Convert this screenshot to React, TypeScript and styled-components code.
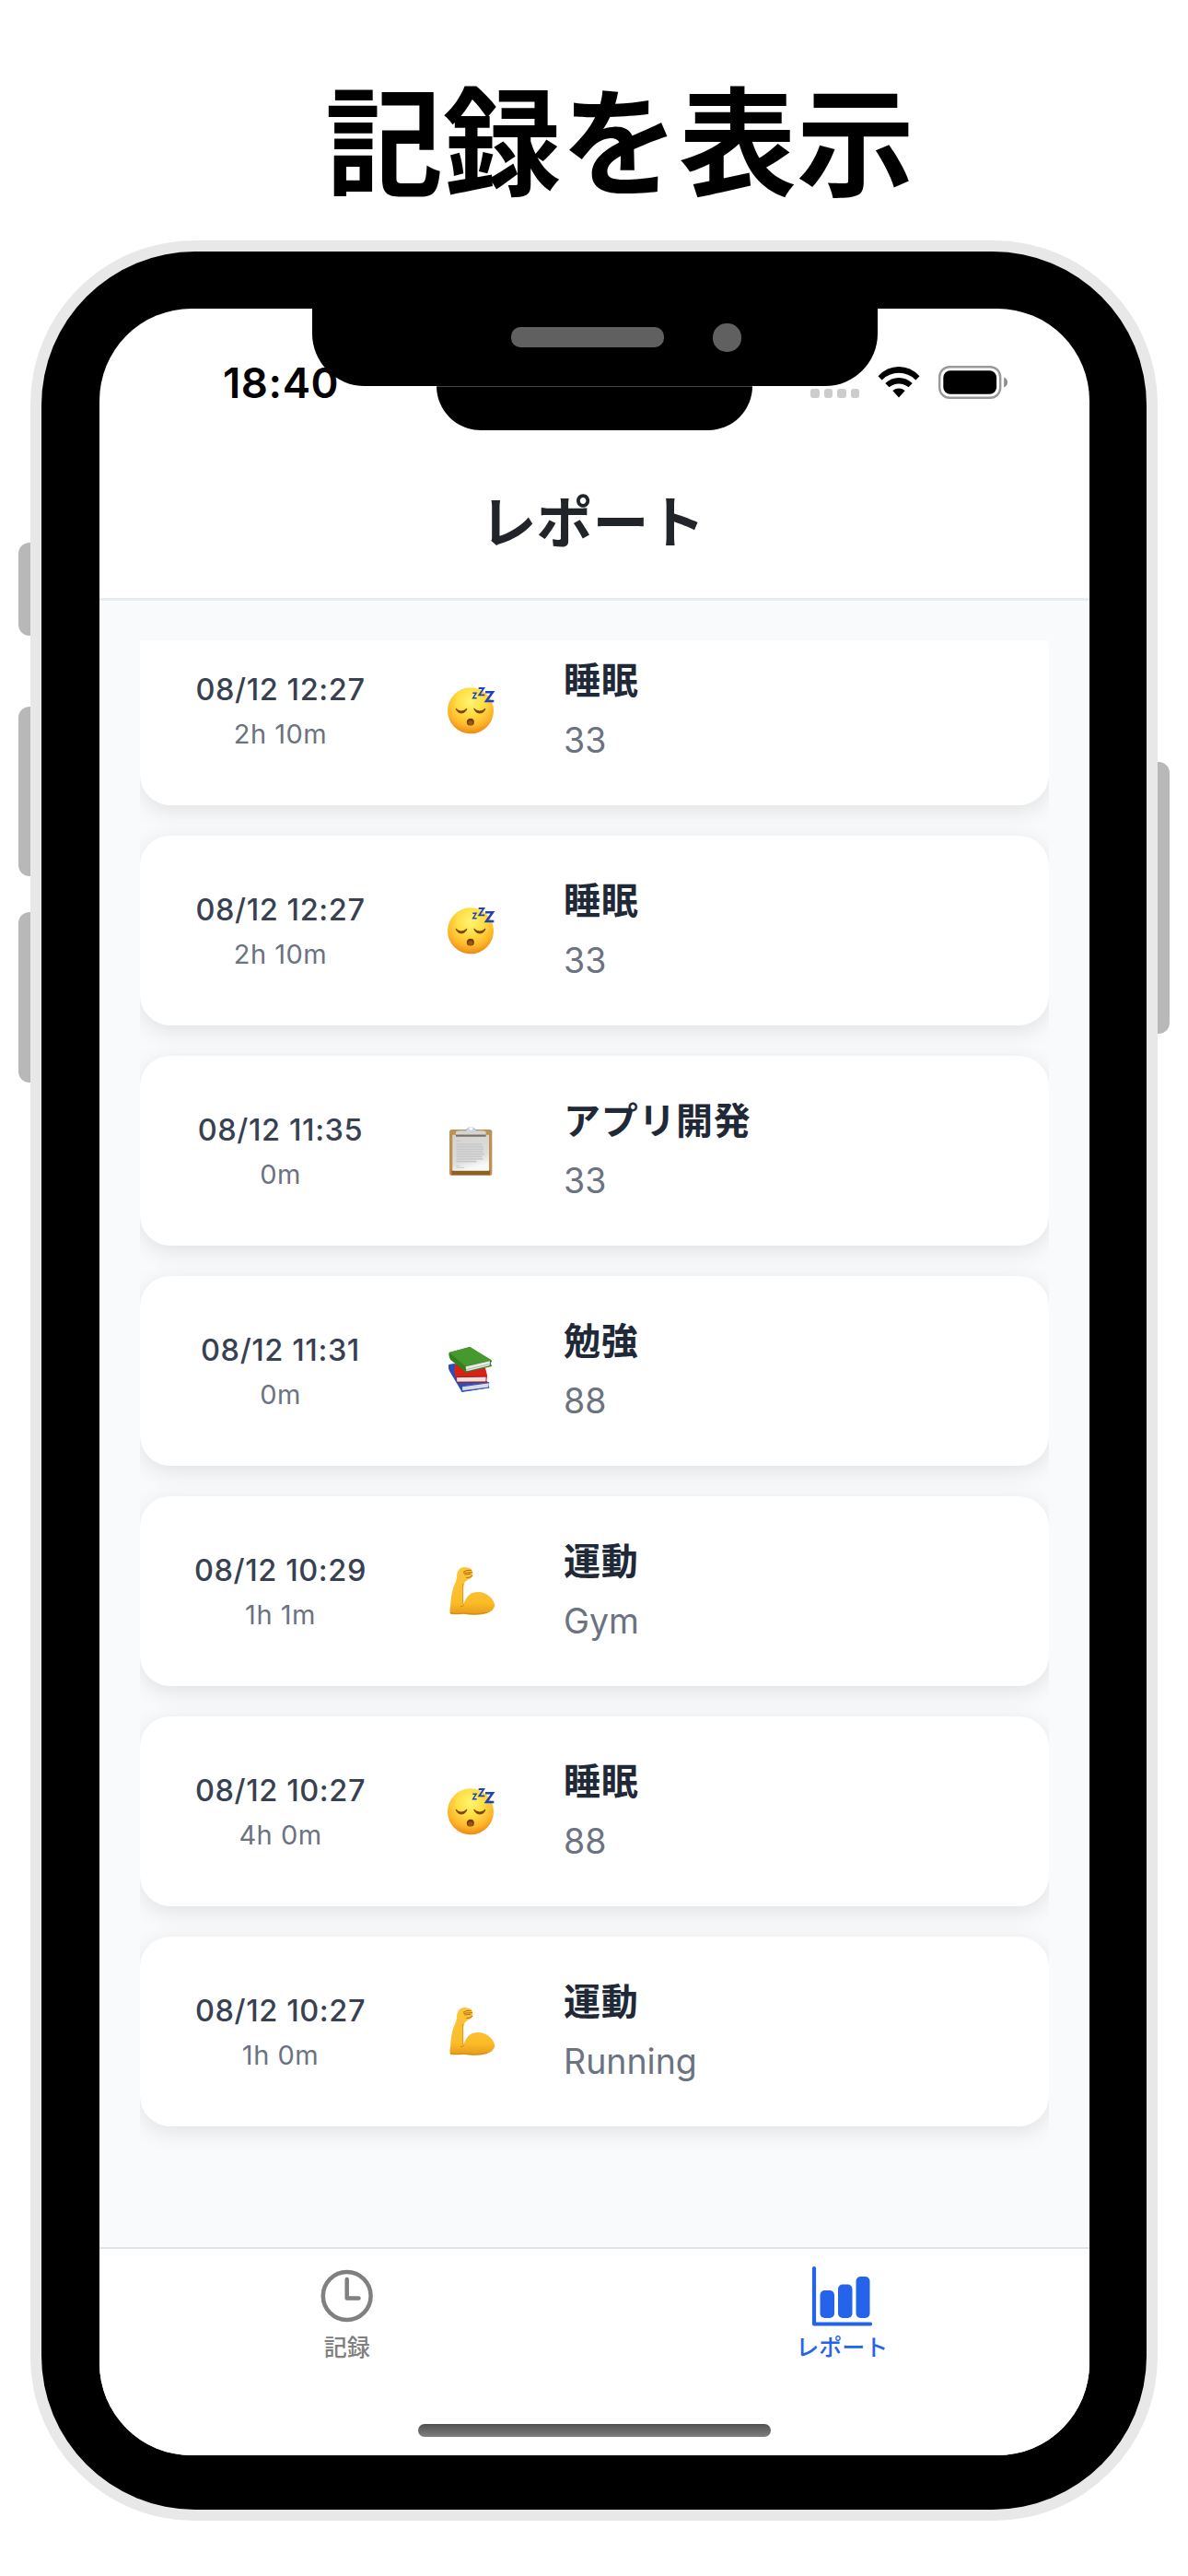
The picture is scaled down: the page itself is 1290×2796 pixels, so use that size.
import React from "react";
import styled, { createGlobalStyle } from "styled-components";

const jp = `"Noto Sans CJK JP", sans-serif`;
const latin = `Inter, "Noto Sans CJK JP", sans-serif`;

const Global = createGlobalStyle`
  * { box-sizing: border-box; }
  body { margin: 0; background: #fff; }
`;

const Page = styled.main`
  width: 1290px;
  height: 2796px;
  overflow: hidden;
  display: flex;
  flex-direction: column;
  background: #fff;
`;

const Headline = styled.h1`
  margin: 0;
  height: 261px;
  padding: 53px 0 0 56px;
  font: 700 128px/190px ${jp};
  text-align: center;
  color: #000;
`;

const Device = styled.div`
  display: flex;
  padding-left: 20px;
`;

const Side = styled.div`
  width: 13px;
  display: flex;
  flex-direction: column;
`;

const SideButton = styled.div<{ $gap: number; $length: number; $right?: boolean }>`
  margin-top: ${(p) => p.$gap}px;
  height: ${(p) => p.$length}px;
  background: #b8b8b8;
  border-radius: ${(p) => (p.$right ? "0 12px 12px 0" : "12px 0 0 12px")};
`;

const Shell = styled.div`
  width: 1224px;
  height: 2475px;
  padding: 12px;
  border-radius: 178px;
  background: #e8e8e8;
`;

const Bezel = styled.div`
  position: relative;
  height: 2451px;
  padding: 62px 62px 59px 63px;
  border-radius: 167px;
  background: #000;
`;

const Screen = styled.div`
  height: 2330px;
  border-radius: 100px;
  overflow: hidden;
  display: flex;
  flex-direction: column;
  background: #fff;
`;

const Notch = styled.div`
  position: absolute;
  top: 62px;
  left: 294px;
  width: 614px;
  height: 84px;
  display: flex;
  align-items: center;
  padding: 0 0 22px 216px;
  gap: 53px;
  border-radius: 0 0 57px 57px;
  background: #000;
`;

const Speaker = styled.div`
  width: 166px;
  height: 22px;
  border-radius: 10px;
  background: #606060;
`;

const Camera = styled.div`
  width: 31px;
  height: 31px;
  border-radius: 15px;
  background: #606060;
`;

const Island = styled.div`
  position: absolute;
  top: 146px;
  left: 429px;
  width: 343px;
  height: 48px;
  border-top: 1px solid #444;
  border-radius: 0 0 49px 49px;
  background: #000;
`;

const StatusBar = styled.div`
  height: 161px;
  flex: none;
  display: flex;
  justify-content: space-between;
  padding: 60px 88px 0 134px;
`;

const Clock = styled.div`
  padding-top: 1px;
  font: 600 45.5px/40px ${latin};
  letter-spacing: 0.6px;
  color: #000;
`;

const StatusIcons = styled.div`
  display: flex;
  align-items: center;
  height: 40px;
`;

const Signal = styled.div`
  display: flex;
  gap: 5px;
  margin: 24px 20px 0 0;
`;

const SignalDot = styled.i`
  width: 9.5px;
  height: 9.5px;
  border-radius: 3px;
  background: #ccc;
`;

const Header = styled.header`
  height: 156px;
  flex: none;
  border-bottom: 3px solid #e9ecef;
  padding: 24px 4px 0 0;
  font: 700 61px/88px ${jp};
  text-align: center;
  color: #212529;
`;

const Content = styled.section`
  flex: 1;
  padding: 43px 44px 0;
  background: #f9fafc;
`;

const List = styled.div`
  height: 1744px;
  overflow: hidden;
`;

const Rows = styled.div`
  margin-top: -27px;
  display: flex;
  flex-direction: column;
  gap: 33px;
`;

const Card = styled.article`
  height: 206px;
  display: grid;
  grid-template-columns: 305px 108px 1fr;
  border-radius: 33px;
  background: #fff;
  box-shadow: 0 6px 24px rgba(0, 0, 0, 0.1);
`;

const When = styled.div`
  padding-top: 61px;
  display: flex;
  flex-direction: column;
  align-items: center;
  gap: 9px;
`;

const Started = styled.div`
  font: 500 32.5px/40px ${latin};
  letter-spacing: 0.6px;
  color: #374151;
`;

const Duration = styled.div`
  font: 400 29px/37px ${latin};
  letter-spacing: 0.5px;
  color: #6b7280;
`;

const Glyph = styled.div`
  display: flex;
  align-items: center;
  justify-content: center;
`;

const What = styled.div`
  padding: 44px 0 0 47px;
  display: flex;
  flex-direction: column;
  gap: 21px;
`;

const Activity = styled.div`
  font: 700 40px/48px ${jp};
  letter-spacing: 0.7px;
  color: #1f2937;
`;

const Note = styled.div`
  font: 400 37.5px/46px ${latin};
  color: #6b7280;
`;

const TabBar = styled.nav`
  height: 226px;
  flex: none;
  display: flex;
  flex-direction: column;
  align-items: center;
  border-top: 2px solid #e2e3e4;
  background: #fff;
`;

const Tabs = styled.div`
  width: 100%;
  height: 190px;
  display: grid;
  grid-template-columns: 1fr 1fr;
`;

const Tab = styled.div<{ $active?: boolean }>`
  display: flex;
  flex-direction: column;
  align-items: center;
  padding-top: 18px;
  color: ${(p) => (p.$active ? "#2563eb" : "#808080")};
`;

const TabLabel = styled.span`
  margin-top: 3px;
  font: 500 25px/32px ${jp};
`;

const HomeIndicator = styled.div`
  width: 383px;
  height: 14px;
  border-radius: 7px;
  background: linear-gradient(#505050, #808080);
`;

const WifiIcon = () => (
  <svg width="46" height="34" viewBox="0 0 46 34" style={{ marginRight: 20 }}>
    <path d="M0.5 10.2Q10 0 23 0T45.5 10.2L41.4 14.4Q33.500 6.800 23 6.800T4.600 14.400Z" />
    <path d="M8.200 18.100Q14.500 12 23 12T37.800 18.100L33.500 22.300Q29 18.400 23 18.400T12.500 22.300Z" />
    <path d="M16.300 26Q23 21.200 29.700 26L23 33.500Z" />
  </svg>
);

const BatteryIcon = () => (
  <svg width="76" height="36" viewBox="0 0 76 36">
    <rect x="1.200" y="1.200" width="66" height="33.600" rx="11" fill="none" stroke="#999" strokeWidth="2.400" />
    <rect x="5.300" y="5.300" width="57.800" height="25.400" rx="7.500" />
    <path d="M71.200 12.500Q75 14.500 75 18T71.200 23.500Z" fill="#8c8c8c" />
  </svg>
);

const Sleeping = () => (
  <svg width="56" height="56" viewBox="69 68 168 168">
    <defs>
      <radialGradient id="face" cx="0.5" cy="0.3" r="0.72">
        <stop offset="0" stopColor="#fff470" />
        <stop offset="0.4" stopColor="#ffdf45" />
        <stop offset="0.75" stopColor="#fdb52a" />
        <stop offset="1" stopColor="#ea8414" />
      </radialGradient>
    </defs>
    <circle cx="153" cy="153" r="75" fill="url(#face)" />
    <path d="M105 146Q122 164 141 146Q136 161 123 161T105 146ZM164 146Q183 164 201 146Q197 161 183 161T164 146Z" fill="#7b4206" stroke="#7b4206" strokeWidth="2.500" strokeLinejoin="round" />
    <ellipse cx="152.500" cy="190" rx="12" ry="11.500" fill="#6e3d06" />
    <ellipse cx="152.500" cy="193" rx="8" ry="7" fill="#9a570a" />
    <g fill="none" stroke="#1f43bd" strokeLinejoin="miter">
      <path d="M160 96H171L161 112H173" strokeWidth="4.500" />
      <path d="M179 80H196L181 102H199" strokeWidth="5.500" />
      <path d="M201 93H225L204 122H229" strokeWidth="7.500" />
    </g>
  </svg>
);

const Clipboard = () => (
  <svg width="56" height="56" viewBox="69 62 168 168">
    <defs>
      <linearGradient id="paper" x1="0" y1="0" x2="0.3" y2="1">
        <stop offset="0" stopColor="#d2d2d2" />
        <stop offset="0.75" stopColor="#dedede" />
        <stop offset="1" stopColor="#f8f8f8" />
      </linearGradient>
    </defs>
    <rect x="84" y="77" width="139" height="150" rx="8" fill="#bd9150" />
    <path d="M91 210H216V224H91Z" fill="#8c6123" />
    <path d="M94 94H213V211H94Z" fill="url(#paper)" />
    <path d="M106 114H122M106 195H118M106 201H132" stroke="#bbb" strokeWidth="2" />
    <path d="M106 125H190M106 133H194M106 141H196M106 149H193M106 157H197M106 165H190M106 173H194M106 181H172" stroke="#c8c8c8" strokeWidth="5" />
    <path d="M105 94H203V100H105Z" fill="#77706a" />
    <path d="M105 93V86Q106 81 116 81H134Q139 80 140 76Q143 68 154 68T168 76Q169 80 175 81H192Q202 81 203 86V93Z" fill="#cfd4d9" />
    <circle cx="154" cy="74" r="5" fill="#fff" />
    <path d="M136 81Q140 79 142 74M172 81Q168 79 166 74" fill="none" stroke="#86addb" strokeWidth="3" />
  </svg>
);

const Books = () => (
  <svg width="56" height="56" viewBox="69 74 168 168">
    <path d="M82 137L100 134L214 196L212 206L214 213L125 227L84 158Q79 148 82 137Z" fill="#2b4eb8" />
    <path d="M126 208L213 196L210 212L127 223Z" fill="#dcdcdc" />
    <path d="M126 208L213 196M122 224L214 212" stroke="#3459cc" strokeWidth="3.500" />
    <path d="M104 134L201 148L207 172L205 195L110 195L101 168Q98 148 104 134Z" fill="#d92118" />
    <path d="M108 179L203 177L202 193L109 193Z" fill="#e6e3e0" />
    <path d="M106 178L207 176M108 195L207 194" stroke="#b8140f" strokeWidth="3" />
    <path d="M83 98L151 80L221 123L222 128L218 131L222 143L138 163L88 122Q80 110 83 98Z" fill="#32811f" />
    <path d="M83 98L151 80L220 124L136 142Z" fill="#46982f" />
    <path d="M137 144L216 126L215 141L139 159Z" fill="#e9e9e9" />
    <path d="M138 154L214 136" stroke="#b4b4b4" strokeWidth="3" />
  </svg>
);

const Muscle = () => (
  <svg width="56" height="56" viewBox="69 56 168 168">
    <defs>
      <linearGradient id="arm" x1="0" y1="0" x2="0" y2="1">
        <stop offset="0" stopColor="#fcc63c" />
        <stop offset="0.75" stopColor="#fbbc28" />
        <stop offset="1" stopColor="#e59a1a" />
      </linearGradient>
    </defs>
    <path d="M112 75Q118 63 130 62Q148 62 157 70Q161 78 159 91Q156 98 147 101L134 111L128 128L128 184Q134 173 140 162Q151 144 174 143Q200 142 218 160Q230 172 232 187Q228 204 207 212Q170 222 130 214Q108 217 89 215Q83 209 87 191Q89 150 98 125Q106 108 108 97Q107 85 112 75Z" fill="url(#arm)" />
    <path d="M128 116V183M120 190Q126 191 132 186M86 211Q107 216 130 212Q170 219 207 210" fill="none" stroke="#d48310" strokeWidth="2.500" />
    <path d="M130 77Q139 70 154 72M131 81Q140 79 158 79M134 86L152 84M140 97Q151 97 159 90" fill="none" stroke="#b46b10" strokeWidth="3" strokeLinecap="round" />
  </svg>
);

const ClockIcon = () => (
  <svg width="66" height="68" viewBox="0 0 66 68" fill="none" stroke="currentColor" strokeWidth="4.500" strokeLinecap="round" strokeLinejoin="round">
    <circle cx="32.700" cy="33" r="25.900" />
    <path d="M32.700 15V35.500H45.500" />
  </svg>
);

const ChartIcon = () => (
  <svg width="66" height="68" viewBox="0 0 66 68" fill="currentColor">
    <path d="M3 3V63.500H64" fill="none" stroke="currentColor" strokeWidth="4.200" strokeLinecap="round" strokeLinejoin="round" />
    <rect x="9.500" y="27" width="15.500" height="30" rx="5" />
    <rect x="29" y="20.500" width="15.500" height="36.500" rx="5" />
    <rect x="48.500" y="12" width="15" height="45" rx="5" />
  </svg>
);

const glyphs = { sleep: Sleeping, board: Clipboard, books: Books, muscle: Muscle };

type Entry = { at: string; took: string; glyph: keyof typeof glyphs; name: string; note: string };

const entries: Entry[] = [
  { at: "08/12 12:27", took: "2h 10m", glyph: "sleep", name: "睡眠", note: "33" },
  { at: "08/12 12:27", took: "2h 10m", glyph: "sleep", name: "睡眠", note: "33" },
  { at: "08/12 11:35", took: "0m", glyph: "board", name: "アプリ開発", note: "33" },
  { at: "08/12 11:31", took: "0m", glyph: "books", name: "勉強", note: "88" },
  { at: "08/12 10:29", took: "1h 1m", glyph: "muscle", name: "運動", note: "Gym" },
  { at: "08/12 10:27", took: "4h 0m", glyph: "sleep", name: "睡眠", note: "88" },
  { at: "08/12 10:27", took: "1h 0m", glyph: "muscle", name: "運動", note: "Running" },
];

function EntryCard({ entry }: { entry: Entry }) {
  const Icon = glyphs[entry.glyph];
  return (
    <Card>
      <When>
        <Started>{entry.at}</Started>
        <Duration>{entry.took}</Duration>
      </When>
      <Glyph>
        <Icon />
      </Glyph>
      <What>
        <Activity>{entry.name}</Activity>
        <Note>{entry.note}</Note>
      </What>
    </Card>
  );
}

export default function App() {
  return (
    <Page lang="ja">
      <Global />
      <Headline>記録を表示</Headline>
      <Device>
        <Side>
          <SideButton $gap={328} $length={101} />
          <SideButton $gap={77} $length={184} />
          <SideButton $gap={39} $length={185} />
        </Side>
        <Shell>
          <Bezel>
            <Screen>
              <StatusBar>
                <Clock>18:40</Clock>
                <StatusIcons>
                  <Signal>
                    <SignalDot />
                    <SignalDot />
                    <SignalDot />
                    <SignalDot />
                  </Signal>
                  <WifiIcon />
                  <BatteryIcon />
                </StatusIcons>
              </StatusBar>
              <Header>レポート</Header>
              <Content>
                <List>
                  <Rows>
                    {entries.map((entry, i) => (
                      <EntryCard key={i} entry={entry} />
                    ))}
                  </Rows>
                </List>
              </Content>
              <TabBar>
                <Tabs>
                  <Tab>
                    <ClockIcon />
                    <TabLabel>記録</TabLabel>
                  </Tab>
                  <Tab $active>
                    <ChartIcon />
                    <TabLabel>レポート</TabLabel>
                  </Tab>
                </Tabs>
                <HomeIndicator />
              </TabBar>
            </Screen>
            <Notch>
              <Speaker />
              <Camera />
            </Notch>
            <Island />
          </Bezel>
        </Shell>
        <Side>
          <SideButton $gap={566} $length={295} $right />
        </Side>
      </Device>
    </Page>
  );
}
